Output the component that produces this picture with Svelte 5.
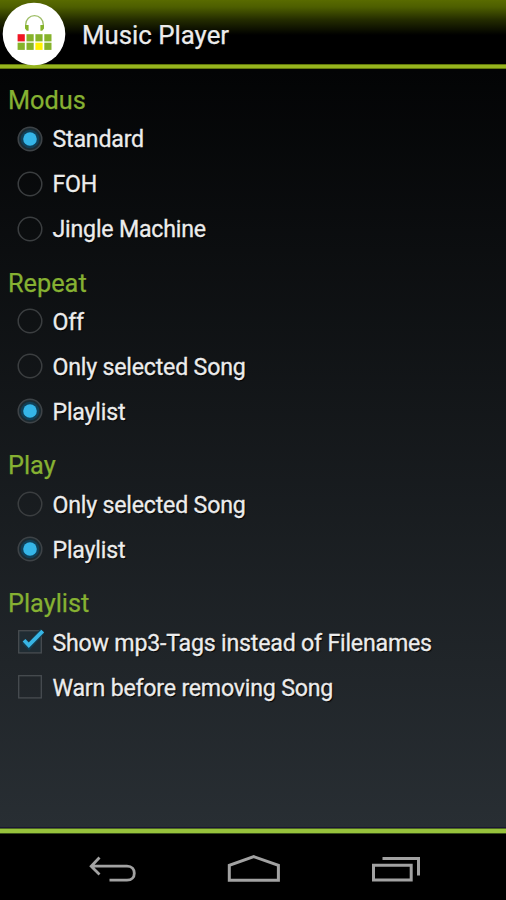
<script>
  const sections = [
    { title: 'Modus', kind: 'radio', items: [['Standard', true], ['FOH', false], ['Jingle Machine', false]] },
    { title: 'Repeat', kind: 'radio', items: [['Off', false], ['Only selected Song', false], ['Playlist', true]] },
    { title: 'Play', kind: 'radio', items: [['Only selected Song', false], ['Playlist', true]] },
    { title: 'Playlist', kind: 'check', items: [['Show mp3-Tags instead of Filenames', true], ['Warn before removing Song', false]] }
  ];
  const tiles = ['#f01624', '#86b32b', '#86b32b', '#86b32b', '#86b32b', '#86b32b', '#fff200', '#86b32b'];
</script>

<div class="screen">
  <header>
    <svg class="logo" width="64" height="64" viewBox="0 0 64 64">
      <circle cx="32" cy="32" r="31.3" fill="#fff" />
      <path d="M23.7 26v-3.5a8.8 8.8 0 0 1 17.6 0V26" fill="none" stroke="#9dbd65" stroke-width="1.3" />
      <path d="M23 23h3.6v5.8h-1.8L23 26.5zM42 23h-3.6v5.8h1.8l1.8-2.3z" fill="#86b32b" />
      {#each tiles as color, i}
        <rect x={15.6 + (i % 4) * 8.9} y={32.2 + Math.floor(i / 4) * 8.5} width="7.2" height="7.2" fill={color} />
      {/each}
    </svg>
    <h1>Music Player</h1>
  </header>

  <main>
    {#each sections as section}
      <section>
        <h2>{section.title}</h2>
        {#each section.items as [label, on]}
          <div class="row">
            <svg class="control" width="28" height="28" viewBox="0 0 28 28">
              {#if section.kind === 'radio'}
                {#if on}
                  <circle cx="14" cy="14" r="11.8" fill="#1c2a31" stroke="#3e4347" stroke-width="1.5" />
                  <circle cx="14" cy="14" r="9.3" fill="#103f57" />
                  <circle cx="14" cy="14" r="6.8" fill="#35b5e8" />
                {:else}
                  <circle cx="14" cy="14" r="11.8" fill="none" stroke="#3b3e40" stroke-width="1.5" />
                {/if}
              {:else}
                <rect x="2.7" y="2.7" width="22.6" height="22.2" fill={on ? '#202c33' : 'none'} stroke="#484d51" stroke-width="1.3" />
                {#if on}
                  <path d="M8 13.2l5 5.2L26.5 3" fill="none" stroke="#153c4e" stroke-width="6" />
                  <path d="M8 12.2l4.8 5L26.7 3" fill="none" stroke="#38b5e4" stroke-width="3.8" />
                {/if}
              {/if}
            </svg>
            <span>{label}</span>
          </div>
        {/each}
      </section>
    {/each}
  </main>

  <nav>
    <svg width="48" height="28" viewBox="0 0 48 28">
      <path d="M2 11.2h36c5 0 7.3 3.2 7.3 7s-2.3 7-7.3 7H20.5M10.5 2.5L2.2 11.2l8.3 8.3" fill="none" stroke="#a2a2a2" stroke-width="2.8" />
    </svg>
    <svg width="54" height="28" viewBox="0 0 54 28">
      <path d="M2.3 25.2V10.3L26.8 1.7l24.6 8.6v14.9z" fill="none" stroke="#a2a2a2" stroke-width="3" />
    </svg>
    <svg width="50" height="28" viewBox="0 0 50 28">
      <path d="M2.5 10.3h37.7v14.8H2.5zM11.5 3.4h36v17" fill="none" stroke="#a2a2a2" stroke-width="3" />
    </svg>
  </nav>
</div>

<style>
  :global(body) { margin: 0; background: #000; }
  .screen {
    width: 506px;
    height: 900px;
    display: flex;
    flex-direction: column;
    overflow: hidden;
    font-family: Roboto, sans-serif;
    background: #000;
  }
  header {
    box-sizing: border-box;
    height: 69px;
    display: flex;
    padding: 2px 0 0 2px;
    background:
      linear-gradient(#405000, #96b41e 25%, #96b41e 75%, #405000) 0 64px / 100% 5px no-repeat,
      linear-gradient(#596b00 0, #4d5e00 7px, #232b00 20px, #000 35px);
  }
  .logo { flex: none; }
  h1 {
    margin: 0 0 0 16px;
    font-size: 25.8px;
    line-height: 66px;
    font-weight: 400;
    color: #ececec;
    -webkit-text-stroke: 0.25px #ececec;
  }
  main {
    box-sizing: border-box;
    height: 758px;
    background: linear-gradient(#030405, #282e33);
  }
  h2 {
    box-sizing: border-box;
    margin: 0;
    height: 48px;
    padding: 16px 0 0 8px;
    font-size: 25.3px;
    line-height: 32px;
    font-weight: 400;
    color: #86b132;
    -webkit-text-stroke: 0.25px #86b132;
  }
  section:first-child h2 { height: 47.7px; }
  .row {
    display: flex;
    align-items: center;
    height: 44.94px;
    padding-left: 16px;
    gap: 8.5px;
    font-size: 23.2px;
    letter-spacing: -0.22px;
    color: #ececec;
    white-space: nowrap;
    text-shadow: 1px 1px 1px #000;
    -webkit-text-stroke: 0.3px #ececec;
  }
  .control { margin-bottom: 1px; }
  nav {
    box-sizing: border-box;
    height: 73px;
    display: flex;
    align-items: flex-start;
    gap: 90px;
    padding: 28px 0 0 89px;
    background: linear-gradient(#1b1534 0 1px, #4a6520 1px 2px, #97c23c 2px 6px, #38501a 6px 7px, #000 7px);
  }
</style>
